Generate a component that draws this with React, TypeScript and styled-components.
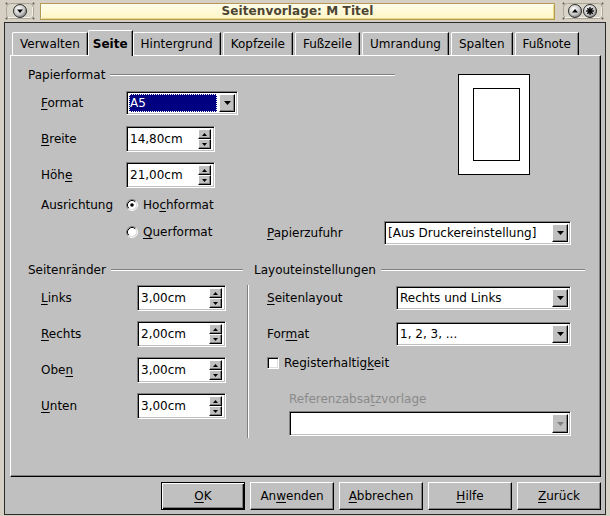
import React from 'react';
import styled, { createGlobalStyle } from 'styled-components';

const GlobalStyle = createGlobalStyle`
  html, body {
    margin: 0;
    padding: 0;
    overflow: hidden;
    background: #d5d0c3;
  }
  body {
    font-family: "DejaVu Sans", Verdana, sans-serif;
    font-size: 12px;
    color: #000;
  }
`;

const Window = styled.div`
  width: 610px;
  height: 516px;
  box-sizing: border-box;
  background: #d5d0c3;
  display: flex;
  flex-direction: column;
`;

const TitleBar = styled.div`
  height: 22px;
  display: flex;
  align-items: center;
  padding: 0 6px 0 5px;
  box-sizing: border-box;
`;

const TitleField = styled.div`
  flex: 1;
  height: 17px;
  margin: 0 7px 0 5px;
  box-sizing: border-box;
  border: 1px solid #b39a4e;
  box-shadow: inset 1px 1px #fffef6, inset -1px -1px #e9d98a;
  background: linear-gradient(#fffde8, #fff6c4);
  display: flex;
  align-items: center;
  justify-content: center;
  font-weight: bold;
  color: #4c4433;
  letter-spacing: 0.1px;
`;

const Body = styled.div`
  flex: 1;
  margin: 0 4px 1px 4px;
  border: 1px solid #2a2a2a;
  background: #c0c0c0;
  display: flex;
  flex-direction: column;
`;

const TabStrip = styled.div`
  height: 32px;
  box-sizing: border-box;
  padding-left: 7px;
  display: flex;
  align-items: flex-end;
  gap: 2px;
`;

const Tab = styled.div<{ $active?: boolean }>`
  position: relative;
  z-index: ${(p) => (p.$active ? 2 : 0)};
  height: ${(p) => (p.$active ? 26 : 23)}px;
  margin: ${(p) => (p.$active ? '0 -2px -1px -2px' : '0')};
  padding: ${(p) => (p.$active ? '0 4px' : '0 7px')};
  box-sizing: border-box;
  display: flex;
  align-items: center;
  background: #c0c0c0;
  border-top: 1px solid #fff;
  border-left: 1px solid #fff;
  border-right: 1px solid #000;
  border-top-left-radius: 2px;
  box-shadow: inset -1px 0 #808080;
  font-weight: ${(p) => (p.$active ? 'bold' : 'normal')};
  white-space: nowrap;
`;

const Panel = styled.div`
  height: 422px;
  box-sizing: border-box;
  margin: 0 4px 0 5px;
  border: 1px solid;
  border-color: #fff #000 #000 #fff;
  box-shadow: inset -1px -1px #808080;
  padding: 12px 0 0 17px;
  display: flex;
  flex-direction: column;
`;

const Mn = styled.span`
  text-decoration: underline;
  text-underline-offset: 2px;
  text-decoration-thickness: 1px;
`;

const PaperSection = styled.div`
  display: flex;
  align-items: flex-start;
`;

const PaperLeft = styled.div`
  width: 367px;
  display: flex;
  flex-direction: column;
`;

const GroupHeader = styled.div`
  height: 14px;
  display: flex;
  align-items: center;
  gap: 5px;
  white-space: nowrap;

  &::after {
    content: '';
    flex: 1;
    height: 0;
    border-top: 1px solid #808080;
    border-bottom: 1px solid #fff;
    margin-top: -1px;
  }
`;

const Fields = styled.div`
  margin-top: 8px;
  display: flex;
  flex-direction: column;
  gap: 10px;
`;

const FieldRow = styled.div<{ $h?: number }>`
  height: ${(p) => p.$h ?? 26}px;
  display: flex;
  align-items: center;
`;

const Label = styled.div<{ $w: number; $indent?: number; $dim?: boolean }>`
  width: ${(p) => p.$w}px;
  padding-left: ${(p) => p.$indent ?? 13}px;
  box-sizing: border-box;
  white-space: nowrap;
  color: ${(p) => (p.$dim ? '#8a8a8a' : '#000')};
`;

const Preview = styled.div`
  margin: 6px 0 0 63px;
  width: 72px;
  height: 101px;
  box-sizing: border-box;
  border: 1px solid #000;
  background: #fff;
  padding: 13px 0 0 14px;
`;

const PreviewInner = styled.div`
  width: 47px;
  height: 73px;
  box-sizing: border-box;
  border: 1px solid #000;
`;

const SunkenBox = styled.div<{ $w: number; $h: number }>`
  width: ${(p) => p.$w}px;
  height: ${(p) => p.$h}px;
  box-sizing: border-box;
  flex-shrink: 0;
  background: #fff;
  border: 1px solid;
  border-color: #808080 #fff #fff #808080;
  box-shadow: inset 1px 1px #000, inset -1px -1px #c0c0c0;
  padding: 2px 2px 2px 2px;
  display: flex;
  align-items: stretch;
`;

const FieldText = styled.div<{ $selected?: boolean }>`
  flex: 1;
  display: flex;
  align-items: center;
  padding-left: 1px;
  margin-right: 2px;
  white-space: nowrap;
  background: ${(p) => (p.$selected ? '#000080' : 'transparent')};
  color: ${(p) => (p.$selected ? '#fff' : '#000')};
  outline: ${(p) => (p.$selected ? '1px dotted #fff' : 'none')};
  outline-offset: -1px;
`;

const RaisedButton = styled.div`
  box-sizing: border-box;
  background: #c0c0c0;
  border: 1px solid;
  border-color: #fff #000 #000 #fff;
  box-shadow: inset -1px -1px #808080;
  display: flex;
  align-items: center;
  justify-content: center;
`;

const ComboButton = styled(RaisedButton)`
  width: 16px;
`;

const SpinColumn = styled.div`
  width: 13px;
  display: flex;
  flex-direction: column;
  margin: 0 1px 0 0;
`;

const SpinButton = styled(RaisedButton)`
  flex: 1;
`;

const OptionRow = styled.div`
  display: flex;
  align-items: center;
  gap: 5px;
  white-space: nowrap;
`;

const QuerRow = styled.div`
  margin-top: 10px;
  height: 24px;
  display: flex;
  align-items: center;
  padding-left: 98px;
`;

const QuerOption = styled(OptionRow)`
  width: 141px;
  align-self: flex-start;
  margin-top: 4px;
`;

const LowerSection = styled.div`
  margin-top: 18px;
  display: flex;
  align-items: flex-start;
`;

const MarginCol = styled.div`
  width: 215px;
  display: flex;
  flex-direction: column;
`;

const Separator = styled.div`
  margin: 22px 0 0 4px;
  width: 0;
  height: 153px;
  border-left: 1px solid #808080;
  border-right: 1px solid #fff;
`;

const LayoutCol = styled.div`
  width: 331px;
  margin-left: 5px;
  display: flex;
  flex-direction: column;
`;

const CheckRow = styled(OptionRow)`
  margin-top: 10px;
  height: 12px;
  padding-left: 13px;
`;

const CheckBox = styled.div`
  width: 12px;
  height: 12px;
  box-sizing: border-box;
  background: #fff;
  border: 1px solid;
  border-color: #808080 #fff #fff #808080;
  box-shadow: inset 1px 1px #000, inset -1px -1px #dfdfdf;
`;

const RefLabel = styled(Label)`
  margin-top: 23px;
  height: 14px;
  display: flex;
  align-items: center;
`;

const RefCombo = styled.div`
  margin: 5px 0 0 35px;
`;

const ButtonRow = styled.div`
  margin-top: 5px;
  padding-right: 4px;
  display: flex;
  justify-content: flex-end;
  gap: 5px;
`;

const DialogButton = styled.div<{ $default?: boolean }>`
  width: 84px;
  height: 28px;
  box-sizing: border-box;
  background: #c0c0c0;
  display: flex;
  align-items: center;
  justify-content: center;
  border: 1px solid;
  border-color: ${(p) => (p.$default ? '#000' : '#fff #000 #000 #fff')};
  box-shadow: ${(p) =>
    p.$default
      ? 'inset 1px 1px #fff, inset -1px -1px #000, inset -2px -2px #808080'
      : 'inset -1px -1px #808080'};
`;

const DownArrow = ({ color = '#000' }: { color?: string }) => (
  <svg width="7" height="4" viewBox="0 0 7 4">
    <polygon points="0,0 7,0 3.5,4" fill={color} />
  </svg>
);

const SpinArrow = ({ up }: { up?: boolean }) => (
  <svg width="5" height="3" viewBox="0 0 5 3">
    <polygon points={up ? '0,3 5,3 2.5,0' : '0,0 5,0 2.5,3'} fill="#000" />
  </svg>
);

const Radio = ({ checked }: { checked?: boolean }) => (
  <svg width="12" height="12" viewBox="0 0 12 12">
    <circle cx="6" cy="6" r="4.5" fill="#fff" />
    <path d="M2.11 9.89 A5.5 5.5 0 0 1 9.89 2.11" fill="none" stroke="#808080" />
    <path d="M2.82 9.18 A4.5 4.5 0 0 1 9.18 2.82" fill="none" stroke="#000" />
    <path d="M9.89 2.11 A5.5 5.5 0 0 1 2.11 9.89" fill="none" stroke="#fff" />
    <path d="M9.18 2.82 A4.5 4.5 0 0 1 2.82 9.18" fill="none" stroke="#dfdfdf" />
    {checked && <circle cx="6" cy="6" r="1.8" fill="#000" />}
  </svg>
);

const Combo = ({
  w,
  h = 24,
  text,
  selected,
  disabled,
}: {
  w: number;
  h?: number;
  text: string;
  selected?: boolean;
  disabled?: boolean;
}) => (
  <SunkenBox $w={w} $h={h}>
    <FieldText $selected={selected}>{text}</FieldText>
    <ComboButton>
      <DownArrow color={disabled ? '#808080' : '#000'} />
    </ComboButton>
  </SunkenBox>
);

const Spin = ({ value }: { value: string }) => (
  <SunkenBox $w={89} $h={26}>
    <FieldText>{value}</FieldText>
    <SpinColumn>
      <SpinButton>
        <SpinArrow up />
      </SpinButton>
      <SpinButton>
        <SpinArrow />
      </SpinButton>
    </SpinColumn>
  </SunkenBox>
);

const roundBtn = (
  <radialGradient id="knob" cx="40%" cy="35%" r="70%">
    <stop offset="0" stopColor="#ffffff" />
    <stop offset="0.6" stopColor="#c8c8c8" />
    <stop offset="1" stopColor="#707070" />
  </radialGradient>
);

const Recess = ({ w }: { w: number }) => (
  <>
    <rect x="1.5" y="1.5" width={w - 3} height="15" rx="4" fill="#d9d4c8" stroke="#a9a396" />
    <path d={`M3 15.5 H${w - 5} Q${w - 2.5} 15.5 ${w - 2.5} 12 V5`} fill="none" stroke="#f4f1ea" />
    <circle cx="1.5" cy="1.5" r="1" fill="#5a564e" />
    <circle cx={w - 1.5} cy="1.5" r="1" fill="#5a564e" />
    <circle cx="1.5" cy="16.5" r="1" fill="#5a564e" />
    <circle cx={w - 1.5} cy="16.5" r="1" fill="#5a564e" />
  </>
);

const MenuIcon = () => (
  <svg width="30" height="18" viewBox="0 0 30 18">
    <defs>{roundBtn}</defs>
    <Recess w={30} />
    <circle cx="15" cy="9" r="6.5" fill="url(#knob)" stroke="#2e2e2e" />
    <polygon points="12,7.5 18,7.5 15,11" fill="#000" />
  </svg>
);

const WindowButtons = () => (
  <svg width="42" height="18" viewBox="0 0 42 18">
    <defs>{roundBtn}</defs>
    <Recess w={42} />
    <circle cx="13" cy="9" r="6.5" fill="url(#knob)" stroke="#2e2e2e" />
    <polygon points="10,10.5 16,10.5 13,7" fill="#000" />
    <circle cx="28" cy="9" r="6.5" fill="url(#knob)" stroke="#2e2e2e" />
    <g stroke="#000" strokeWidth="1.6" strokeLinecap="round">
      <line x1="28" y1="5.8" x2="28" y2="12.2" />
      <line x1="24.8" y1="9" x2="31.2" y2="9" />
      <line x1="25.8" y1="6.8" x2="30.2" y2="11.2" />
      <line x1="30.2" y1="6.8" x2="25.8" y2="11.2" />
    </g>
  </svg>
);

const tabs = ['Verwalten', 'Seite', 'Hintergrund', 'Kopfzeile', 'Fußzeile', 'Umrandung', 'Spalten', 'Fußnote'];

const App = () => {
  return (
    <>
      <GlobalStyle />
      <Window>
        <TitleBar>
          <MenuIcon />
          <TitleField>Seitenvorlage: M Titel</TitleField>
          <WindowButtons />
        </TitleBar>
        <Body>
          <TabStrip>
            {tabs.map((t) => (
              <Tab key={t} $active={t === 'Seite'}>
                {t}
              </Tab>
            ))}
          </TabStrip>
          <Panel>
            <PaperSection>
              <PaperLeft>
                <GroupHeader>Papierformat</GroupHeader>
                <Fields>
                  <FieldRow>
                    <Label $w={98}>
                      <Mn>F</Mn>ormat
                    </Label>
                    <Combo w={112} text="A5" selected />
                  </FieldRow>
                  <FieldRow>
                    <Label $w={98}>
                      <Mn>B</Mn>reite
                    </Label>
                    <Spin value="14,80cm" />
                  </FieldRow>
                  <FieldRow>
                    <Label $w={98}>
                      Höh<Mn>e</Mn>
                    </Label>
                    <Spin value="21,00cm" />
                  </FieldRow>
                  <FieldRow $h={13}>
                    <Label $w={98}>Ausrichtung</Label>
                    <OptionRow>
                      <Radio checked />
                      <span>
                        Ho<Mn>c</Mn>hformat
                      </span>
                    </OptionRow>
                  </FieldRow>
                </Fields>
              </PaperLeft>
              <Preview>
                <PreviewInner />
              </Preview>
            </PaperSection>
            <QuerRow>
              <QuerOption>
                <Radio />
                <span>
                  <Mn>Q</Mn>uerformat
                </span>
              </QuerOption>
              <Label $w={117} $indent={0}>
                <Mn>P</Mn>apierzufuhr
              </Label>
              <Combo w={187} text="[Aus Druckereinstellung]" />
            </QuerRow>
            <LowerSection>
              <MarginCol>
                <GroupHeader>Seitenränder</GroupHeader>
                <Fields>
                  <FieldRow>
                    <Label $w={109}>
                      <Mn>L</Mn>inks
                    </Label>
                    <Spin value="3,00cm" />
                  </FieldRow>
                  <FieldRow>
                    <Label $w={109}>
                      <Mn>R</Mn>echts
                    </Label>
                    <Spin value="2,00cm" />
                  </FieldRow>
                  <FieldRow>
                    <Label $w={109}>
                      Obe<Mn>n</Mn>
                    </Label>
                    <Spin value="3,00cm" />
                  </FieldRow>
                  <FieldRow>
                    <Label $w={109}>
                      <Mn>U</Mn>nten
                    </Label>
                    <Spin value="3,00cm" />
                  </FieldRow>
                </Fields>
              </MarginCol>
              <Separator />
              <LayoutCol>
                <GroupHeader>Layouteinstellungen</GroupHeader>
                <Fields>
                  <FieldRow>
                    <Label $w={142}>
                      <Mn>S</Mn>eitenlayout
                    </Label>
                    <Combo w={175} text="Rechts und Links" />
                  </FieldRow>
                  <FieldRow>
                    <Label $w={142}>
                      For<Mn>m</Mn>at
                    </Label>
                    <Combo w={175} text="1, 2, 3, ..." />
                  </FieldRow>
                </Fields>
                <CheckRow>
                  <CheckBox />
                  <span>
                    Registerhaltig<Mn>k</Mn>eit
                  </span>
                </CheckRow>
                <RefLabel $w={331} $indent={35} $dim>
                  Referenzabsa<Mn>t</Mn>zvorlage
                </RefLabel>
                <RefCombo>
                  <Combo w={282} h={25} text="" disabled />
                </RefCombo>
              </LayoutCol>
            </LowerSection>
          </Panel>
          <ButtonRow>
            <DialogButton $default>
              <span>
                <Mn>O</Mn>K
              </span>
            </DialogButton>
            <DialogButton>
              <span>
                An<Mn>w</Mn>enden
              </span>
            </DialogButton>
            <DialogButton>
              <span>
                <Mn>A</Mn>bbrechen
              </span>
            </DialogButton>
            <DialogButton>
              <span>
                <Mn>H</Mn>ilfe
              </span>
            </DialogButton>
            <DialogButton>
              <span>
                <Mn>Z</Mn>urück
              </span>
            </DialogButton>
          </ButtonRow>
        </Body>
      </Window>
    </>
  );
};

export default App;
